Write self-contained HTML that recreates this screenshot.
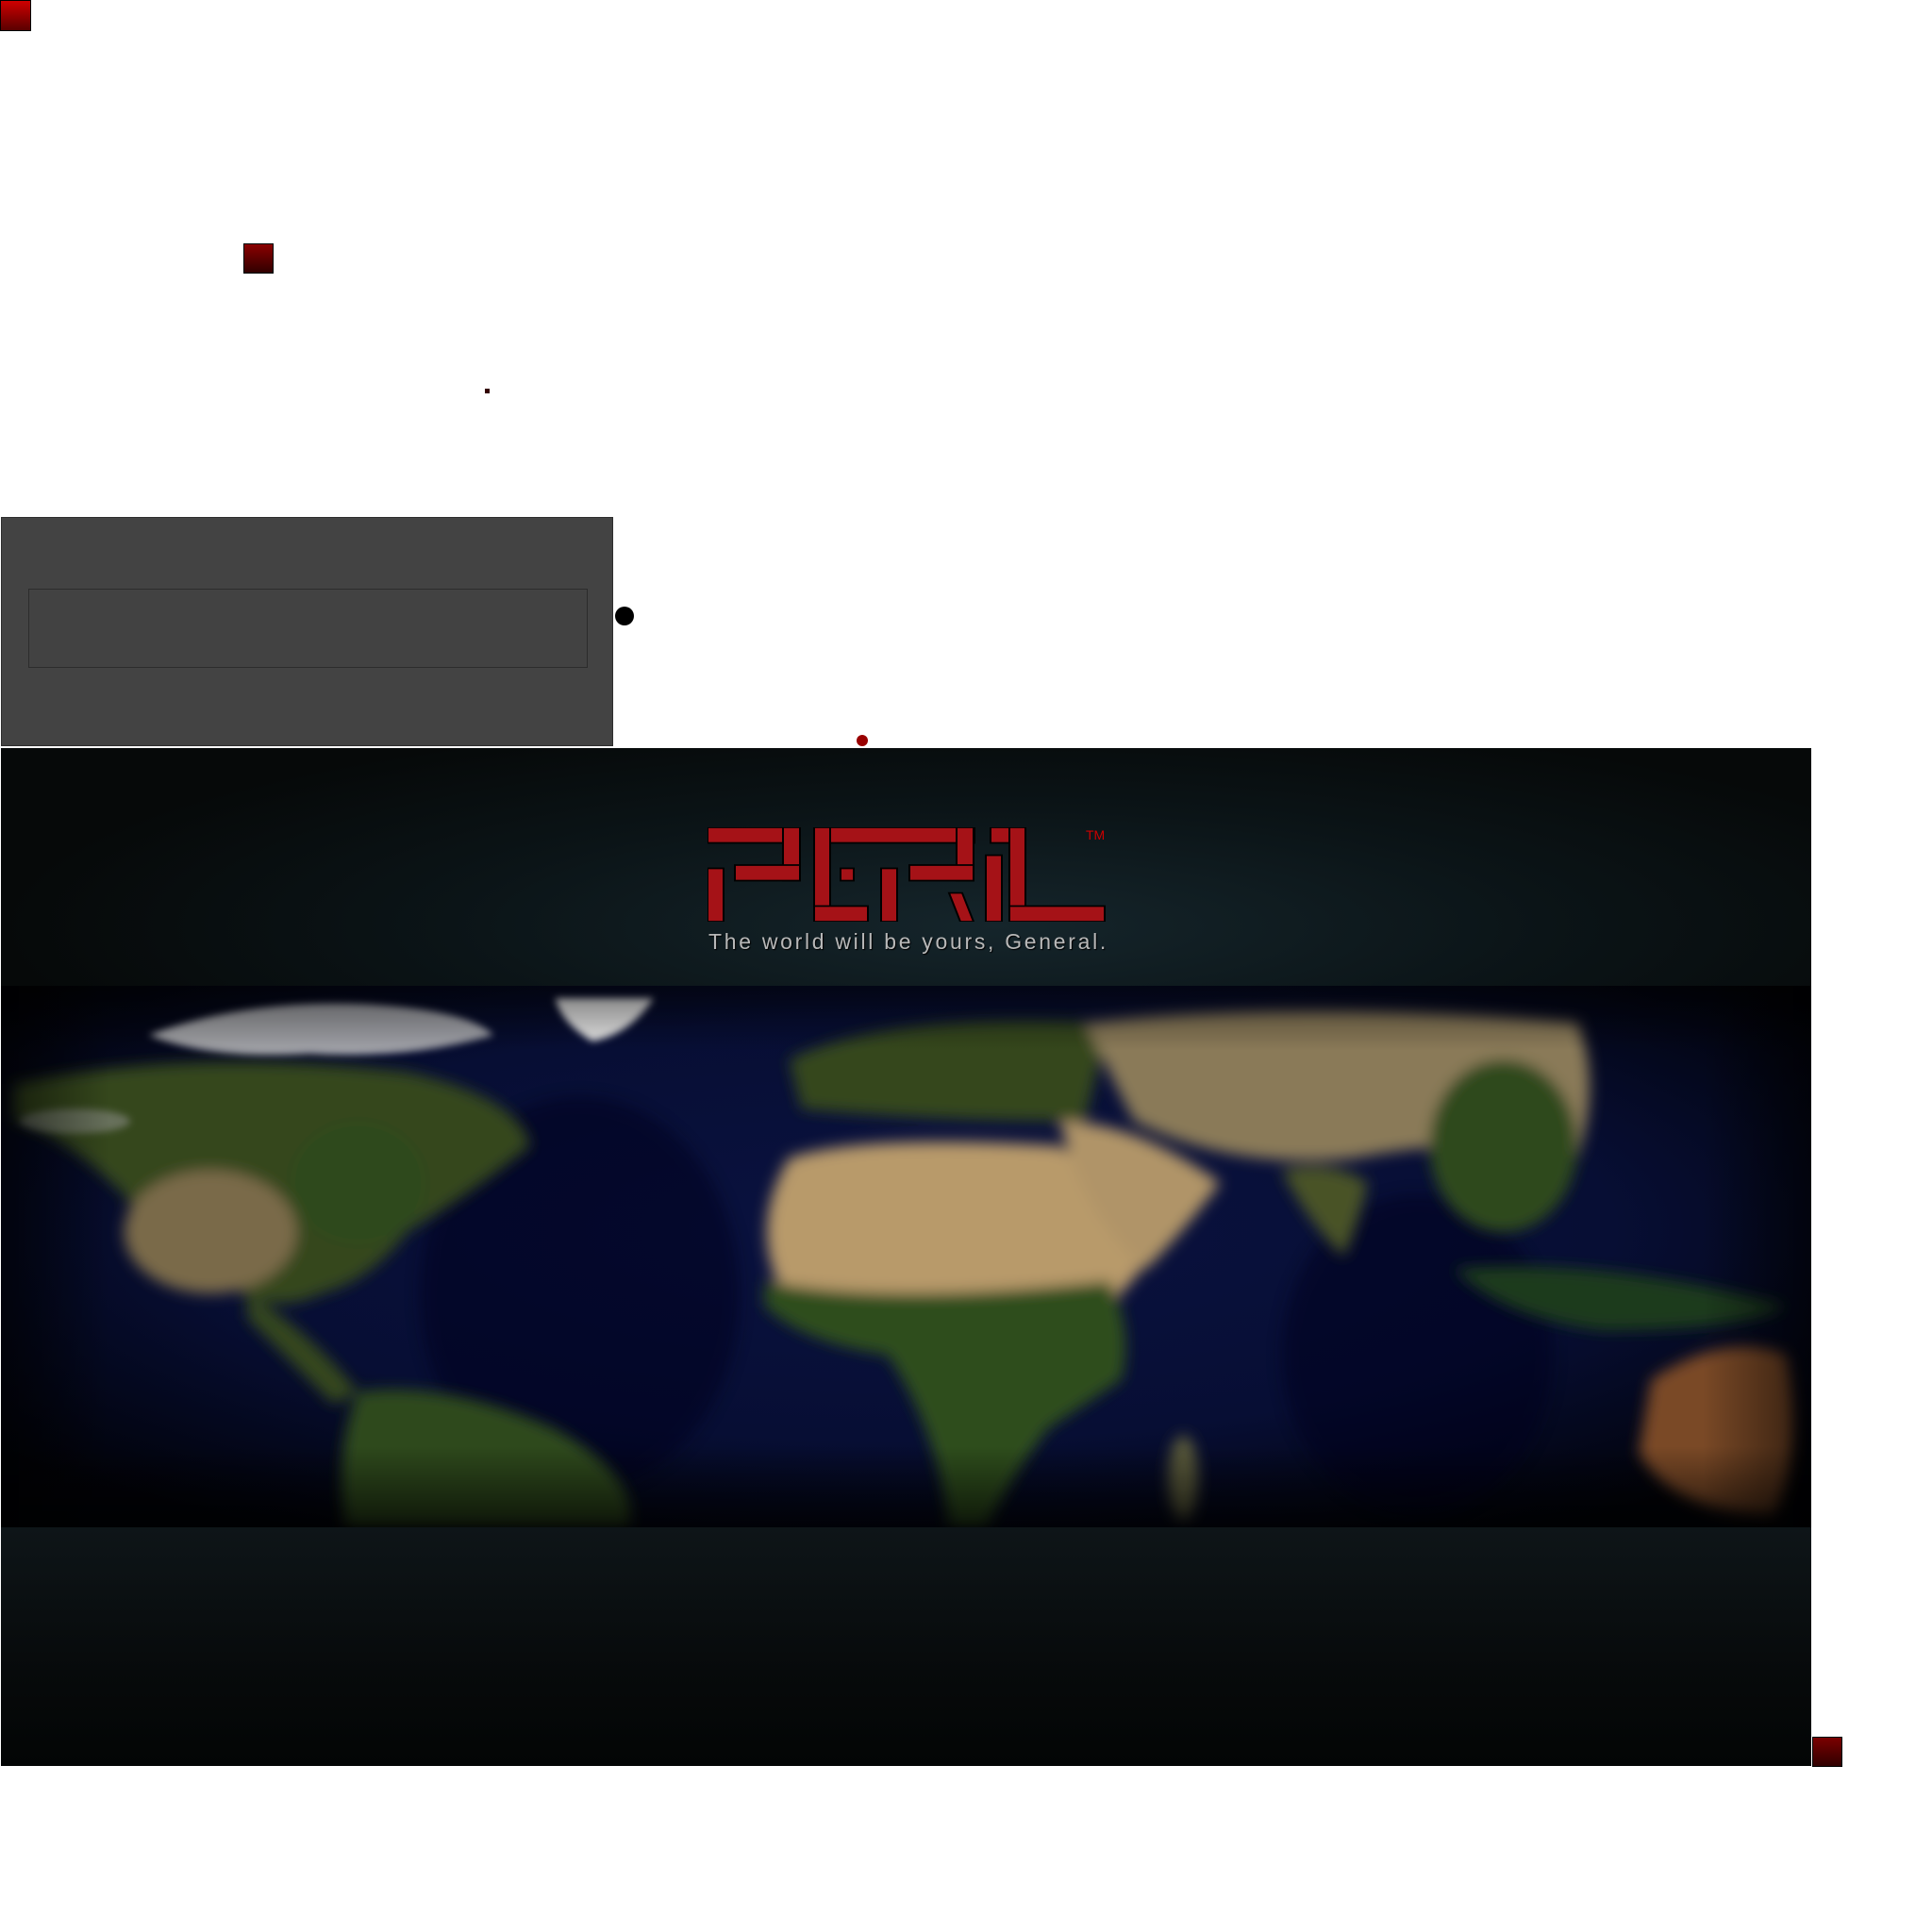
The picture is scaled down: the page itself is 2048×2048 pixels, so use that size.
<!DOCTYPE html>
<html><head><meta charset="utf-8"><style>
html,body{margin:0;padding:0;background:#fff;width:2048px;height:2048px;overflow:hidden;position:relative;font-family:"Liberation Sans",sans-serif}
.abs{position:absolute}
.sq1{left:0;top:0;width:31px;height:31px;border:1px solid #000;background:linear-gradient(#d00000,#5a0000)}
.sq2{left:258px;top:258px;width:30px;height:30px;border:1px solid #000;background:linear-gradient(#8a0000,#300000)}
.sq3{left:1921px;top:1841px;width:30px;height:30px;border:1px solid #000;background:linear-gradient(#7a0000,#300000)}
.gray{left:1px;top:548px;width:647px;height:241px;background:#434343;border:1px solid #2e2e2e}
.inner{left:30px;top:624px;width:591px;height:82px;border:1px solid #2c2c2c;background:#424242}
.dark{left:1px;top:793px;width:1919px;height:1079px;background:#050808}
.head{left:0;top:0;width:1919px;height:252px;background:radial-gradient(ellipse 55% 90% at 55% 75%,#15252b 0%,#0b1417 55%,#060909 100%)}
.foot{left:0;top:826px;width:1919px;height:253px;background:linear-gradient(#0e1518,#070a0b 60%,#030505)}
.tag{left:751px;top:985px;font-size:23px;color:#b8b8b8;letter-spacing:2.7px;text-shadow:1px 1px 1px #000;white-space:nowrap}
.tm{left:1151px;top:877px;font-size:14px;color:#c00;}
</style></head><body>
<div class="abs sq1"></div>
<div class="abs sq2"></div>
<div class="abs" style="left:514px;top:412px;width:5px;height:5px;background:#300"></div>
<div class="abs gray"></div>
<div class="abs inner"></div>
<div class="abs" style="left:652px;top:643px;width:20px;height:20px;border-radius:50%;background:#000"></div>
<div class="abs" style="left:908px;top:779px;width:12px;height:12px;border-radius:50%;background:#900"></div>
<div class="abs dark">
 <div class="abs head"></div>
 <svg class="abs" style="left:0;top:252px" width="1919" height="574" viewBox="0 0 1470 440" preserveAspectRatio="none">
  <defs>
   <filter id="b" x="-20%" y="-20%" width="140%" height="140%"><feGaussianBlur stdDeviation="6"/></filter>
   <filter id="b2"><feGaussianBlur stdDeviation="3"/></filter>
   <radialGradient id="oc" cx="50%" cy="45%" r="65%"><stop offset="0" stop-color="#0a1240"/><stop offset="0.6" stop-color="#070e34"/><stop offset="1" stop-color="#010208"/></radialGradient>
   <linearGradient id="vig" x1="0" x2="0" y1="0" y2="1"><stop offset="0" stop-color="#000" stop-opacity=".5"/><stop offset=".12" stop-color="#000" stop-opacity="0"/><stop offset=".85" stop-color="#000" stop-opacity="0"/><stop offset="1" stop-color="#000" stop-opacity=".7"/></linearGradient>
   <linearGradient id="hv" x1="0" x2="1"><stop offset="0" stop-color="#000" stop-opacity=".6"/><stop offset=".06" stop-color="#000" stop-opacity="0"/><stop offset=".94" stop-color="#000" stop-opacity="0"/><stop offset="1" stop-color="#000" stop-opacity=".6"/></linearGradient>
  </defs>
  <rect width="1470" height="440" fill="url(#oc)"/>
  <ellipse cx="470" cy="250" rx="130" ry="160" fill="#03061a" opacity=".5" filter="url(#b)"/>
  <ellipse cx="1150" cy="300" rx="110" ry="130" fill="#03061a" opacity=".5" filter="url(#b)"/>
  <g filter="url(#b)">
   <path d="M10,80 Q150,50 330,70 Q420,90 430,130 Q380,170 330,200 Q300,240 260,250 Q220,270 180,240 Q130,220 100,170 Q50,120 10,110Z" fill="#34461e"/>
   <ellipse cx="170" cy="200" rx="70" ry="50" fill="#7a6a48"/>
   <ellipse cx="290" cy="160" rx="55" ry="50" fill="#2f4a1c"/>
   <path d="M200,250 Q250,280 290,330 L270,340 Q230,300 200,270Z" fill="#34461e"/>
   <path d="M290,330 Q360,320 450,360 Q520,400 510,440 L280,440 Q270,380 290,330Z" fill="#2f4a1c"/>
   <path d="M640,60 Q720,20 900,30 L880,110 Q760,110 650,100Z" fill="#34461e"/>
   <path d="M640,140 Q700,120 860,130 Q900,160 950,200 Q920,240 900,260 Q860,300 800,290 Q700,280 630,240 Q610,190 640,140Z" fill="#b89a6a"/>
   <path d="M620,240 Q720,260 900,240 Q920,280 910,320 Q880,340 850,360 Q820,400 800,440 L770,440 Q760,360 720,300 Q650,290 620,260Z" fill="#2f4d1c"/>
   <path d="M860,110 Q920,110 990,160 Q960,200 930,230 Q880,190 860,110Z" fill="#b09468"/>
   <path d="M880,30 Q1050,10 1280,30 Q1300,80 1280,140 Q1200,120 1100,140 Q1000,150 920,110Z" fill="#8a7a58"/>
   <ellipse cx="1220" cy="130" rx="60" ry="70" fill="#2f4a1c"/>
   <path d="M1040,150 Q1080,140 1110,160 Q1100,200 1090,220 Q1060,190 1040,150Z" fill="#4a5226"/>
   <path d="M1180,230 Q1300,220 1450,260 Q1420,280 1300,280 Q1220,270 1180,230Z" fill="#1f3a1a"/>
   <path d="M1340,320 Q1400,280 1450,300 Q1465,380 1440,430 Q1360,430 1330,380Z" fill="#7a4a26"/>
   <ellipse cx="960" cy="400" rx="12" ry="35" fill="#5a5a3a"/>
  </g>
  <g filter="url(#b2)">
   <path d="M120,40 Q200,10 300,15 Q380,20 400,40 Q330,60 250,55 Q170,60 120,40Z" fill="#c8c8c8" opacity=".8"/>
   <path d="M450,10 L530,10 Q510,40 480,45 Q455,30 450,10Z" fill="#e8e8e8"/>
   <ellipse cx="60" cy="110" rx="45" ry="10" fill="#999" opacity=".5"/>
  </g>
  <rect width="1470" height="440" fill="url(#vig)"/>
  <rect width="1470" height="440" fill="url(#hv)"/>
 </svg>
 <div class="abs foot"></div>
</div>
<svg class="abs" style="left:750px;top:877px" width="430" height="100" viewBox="0 0 430 115" preserveAspectRatio="none">
 <g fill="#a51217" stroke="#000" stroke-width="2">
  <rect x="0" y="0" width="98" height="19"/><rect x="80" y="0" width="18" height="65"/><rect x="29" y="46" width="69" height="19"/><rect x="0" y="50" width="17" height="65"/>
  <rect x="113" y="0" width="170" height="19"/><rect x="113" y="0" width="17" height="115"/><rect x="141" y="50" width="14" height="15"/><rect x="113" y="96" width="57" height="19"/>
  <rect x="184" y="50" width="17" height="65"/><rect x="264" y="0" width="18" height="65"/><rect x="214" y="46" width="68" height="19"/>
  <polygon points="256,80 270,80 282,115 268,115"/>
  <rect x="295" y="34" width="17" height="81"/><rect x="300" y="0" width="37" height="19"/><rect x="320" y="0" width="17" height="115"/><rect x="320" y="96" width="101" height="19"/>
 </g>
</svg>
<div class="abs tm">TM</div>
<div class="abs tag">The world will be yours, General.</div>
<div class="abs sq3"></div>
</body></html>
